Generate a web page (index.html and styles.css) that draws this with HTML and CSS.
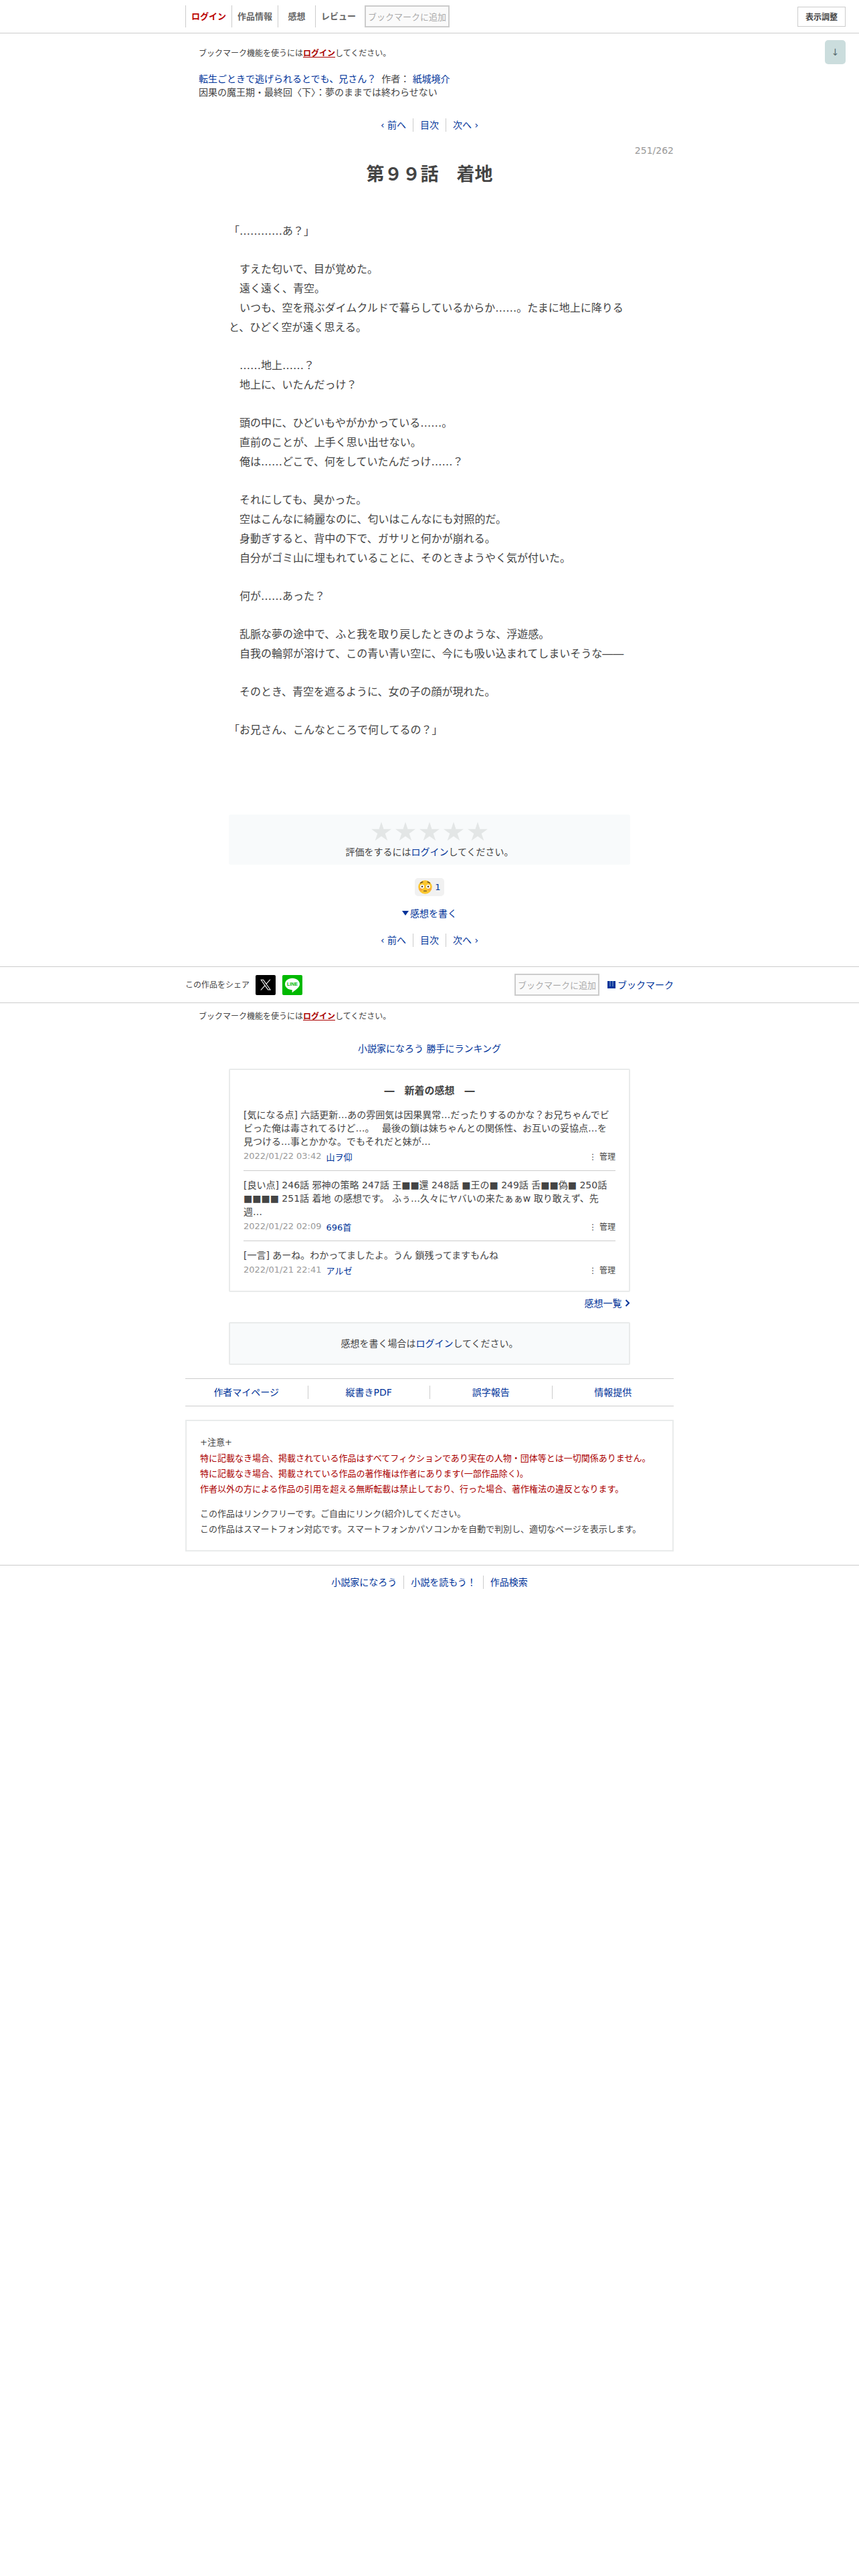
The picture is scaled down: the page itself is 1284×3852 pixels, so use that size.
FILE: index.html
```html
<!DOCTYPE html>
<html lang="ja">
<head>
    <meta charset="UTF-8">
    <meta name="viewport" content="width=device-width, initial-scale=1.0">
    <title>転生ごときで逃げられるとでも、兄さん？ - 第９９話　着地</title>
    <link rel="stylesheet" href="styles.css">
</head>
<body>
    <header class="header">
        <nav class="head-nav">
            <a href="#" class="login">ログイン</a>
            <a href="#">作品情報</a>
            <a href="#">感想</a>
            <a href="#">レビュー</a>
            <button type="button" class="bookmark-button" disabled>ブックマークに追加</button>
        </nav>
        <button type="button" class="display-button">表示調整</button>
    </header>
    <a href="#footer" class="page-down">↓</a>

    <main>
        <div class="container">
            <p class="bookmark-note">ブックマーク機能を使うには<a href="#">ログイン</a>してください。</p>

            <div class="novel-info">
                <p><a href="#">転生ごときで逃げられるとでも、兄さん？</a><span class="author">作者： <a href="#">紙城境介</a></span></p>
                <p>因果の魔王期・最終回〈下〉：夢のままでは終わらせない</p>
            </div>

            <nav class="pager">
                <a href="#">‹ 前へ</a>
                <a href="#">目次</a>
                <a href="#">次へ ›</a>
            </nav>

            <p class="novel-no">251/262</p>
            <h1 class="subtitle">第９９話　着地</h1>
        </div>

        <article class="column honbun">
            <div class="stanza">
                <p>「…………あ？」</p>
            </div>
            <div class="stanza">
                <p>　すえた匂いで、目が覚めた。</p>
                <p>　遠く遠く、青空。</p>
                <p>　いつも、空を飛ぶダイムクルドで暮らしているからか……。たまに地上に降りると、ひどく空が遠く思える。</p>
            </div>
            <div class="stanza">
                <p>　……地上……？</p>
                <p>　地上に、いたんだっけ？</p>
            </div>
            <div class="stanza">
                <p>　頭の中に、ひどいもやがかかっている……。</p>
                <p>　直前のことが、上手く思い出せない。</p>
                <p>　俺は……どこで、何をしていたんだっけ……？</p>
            </div>
            <div class="stanza">
                <p>　それにしても、臭かった。</p>
                <p>　空はこんなに綺麗なのに、匂いはこんなにも対照的だ。</p>
                <p>　身動ぎすると、背中の下で、ガサリと何かが崩れる。</p>
                <p>　自分がゴミ山に埋もれていることに、そのときようやく気が付いた。</p>
            </div>
            <div class="stanza">
                <p>　何が……あった？</p>
            </div>
            <div class="stanza">
                <p>　乱脈な夢の途中で、ふと我を取り戻したときのような、浮遊感。</p>
                <p>　自我の輪郭が溶けて、この青い青い空に、今にも吸い込まれてしまいそうな――</p>
            </div>
            <div class="stanza">
                <p>　そのとき、青空を遮るように、女の子の顔が現れた。</p>
            </div>
            <div class="stanza">
                <p>「お兄さん、こんなところで何してるの？」</p>
            </div>
        </article>

        <section class="column evaluation">
            <svg class="stars" viewBox="0 0 174 28" aria-hidden="true">
                <defs>
                    <path id="star" d="M15 0l3.500 10.700H30l-9.300 6.700L24.300 28 15 21.400 5.700 28l3.600-10.600L0 10.700h11.500z"/>
                </defs>
                <use href="#star"/>
                <use href="#star" x="36"/>
                <use href="#star" x="72"/>
                <use href="#star" x="108"/>
                <use href="#star" x="144"/>
            </svg>
            <p>評価をするには<a href="#">ログイン</a>してください。</p>
        </section>

        <div class="reactions">
            <a href="#" class="reaction">
                <svg width="21" height="21" viewBox="0 0 21 21" aria-hidden="true">
                    <circle cx="10.500" cy="10.500" r="10.300" fill="#fbc62f"/>
                    <circle cx="4" cy="13.500" r="2.600" fill="#f6924b" opacity=".6"/>
                    <circle cx="17" cy="13.500" r="2.600" fill="#f6924b" opacity=".6"/>
                    <circle cx="6" cy="9.800" r="3" fill="#fff"/>
                    <circle cx="15" cy="9.800" r="3" fill="#fff"/>
                    <circle cx="6" cy="9.800" r="1.300" fill="#4a3520"/>
                    <circle cx="15" cy="9.800" r="1.300" fill="#4a3520"/>
                    <path d="M3.500 4.600q1.500-1.600 3.500-1.700M17.500 4.600q-1.500-1.600-3.500-1.700M8.500 16.200h4" fill="none" stroke="#4a3520" stroke-width="1.100" stroke-linecap="round"/>
                </svg>
                <span>1</span>
            </a>
        </div>
        <p class="write-review"><a href="#review"><span class="triangle"></span>感想を書く</a></p>

        <nav class="pager">
            <a href="#">‹ 前へ</a>
            <a href="#">目次</a>
            <a href="#">次へ ›</a>
        </nav>

        <section class="share">
            <div class="container share-inner">
                <span class="share-label">この作品をシェア</span>
                <a href="#" class="sns" aria-label="X">
                    <svg width="30" height="30" viewBox="0 0 30 30">
                        <rect width="30" height="30" rx="2" fill="#000"/>
                        <path transform="translate(6.500 6) scale(.72)" fill="#fff" d="M14.095 10.317 22.286 1h-1.940l-7.115 8.090L7.551 1H1l8.590 12.231L1 23h1.940l7.510-8.543L16.449 23H23zm-2.658 3.022-.872-1.218L3.640 2.430h2.980l5.592 7.821.869 1.219 7.265 10.166h-2.980z"/>
                    </svg>
                </a>
                <a href="#" class="sns" aria-label="LINE">
                    <svg width="30" height="30" viewBox="0 0 30 30">
                        <rect width="30" height="30" rx="2" fill="#00b900"/>
                        <path fill="#fff" d="M15 4.800c6 0 11 3.900 11 8.800 0 3-1.800 5.300-4.600 7.500-2 1.700-4.300 3.400-6 4.600-.8.500-.9 0-.8-.7l.2-1.900c0-.5-.2-.7-.9-.8C8 21.700 4 18.200 4 13.600c0-4.900 5-8.800 11-8.800z"/>
                        <text x="15" y="16" text-anchor="middle" class="line-text">LINE</text>
                    </svg>
                </a>
                <button type="button" class="bookmark-button" disabled>ブックマークに追加</button>
                <a href="#" class="bookmark-link">
                    <svg width="12" height="11" viewBox="0 0 12 11" aria-hidden="true">
                        <path fill="currentColor" d="M0 0h3.700v8h.6V0h3.400v8h.6V0H12v11H0z"/>
                    </svg>
                    ブックマーク
                </a>
            </div>
        </section>

        <div class="container">
            <p class="bookmark-note">ブックマーク機能を使うには<a href="#">ログイン</a>してください。</p>
        </div>

        <p class="ranking"><a href="#">小説家になろう 勝手にランキング</a></p>

        <section class="column review-box">
            <h2>―　新着の感想　―</h2>
            <div class="review">
                <p>[気になる点] 六話更新…あの雰囲気は因果異常…だったりするのかな？お兄ちゃんでビビった俺は毒されてるけど…。　 最後の鎖は妹ちゃんとの関係性、お互いの妥協点…を見つける…事とかかな。でもそれだと妹が…</p>
                <div class="review-meta">
                    <time>2022/01/22 03:42</time>
                    <a href="#">山ヲ仰</a>
                    <span class="manage">⋮ 管理</span>
                </div>
            </div>
            <div class="review">
                <p>[良い点] 246話 邪神の策略 247話 王■■還 248話 ■王の■ 249話 舌■■偽■ 250話 ■■■■ 251話 着地 の感想です。 ふぅ…久々にヤバいの来たぁぁw 取り敢えず、先週…</p>
                <div class="review-meta">
                    <time>2022/01/22 02:09</time>
                    <a href="#">696首</a>
                    <span class="manage">⋮ 管理</span>
                </div>
            </div>
            <div class="review">
                <p>[一言] あーね。わかってましたよ。うん 鎖残ってますもんね</p>
                <div class="review-meta">
                    <time>2022/01/21 22:41</time>
                    <a href="#">アルゼ</a>
                    <span class="manage">⋮ 管理</span>
                </div>
            </div>
        </section>
        <p class="column review-all">
            <a href="#">感想一覧
                <svg width="8" height="11" viewBox="0 0 8 11" aria-hidden="true">
                    <path d="M1.500 1l4.500 4.500L1.500 10" fill="none" stroke="currentColor" stroke-width="2"/>
                </svg>
            </a>
        </p>

        <p class="column review-login" id="review">感想を書く場合は<a href="#">ログイン</a>してください。</p>

        <nav class="container novel-foot">
            <a href="#">作者マイページ</a>
            <a href="#">縦書きPDF</a>
            <a href="#">誤字報告</a>
            <a href="#">情報提供</a>
        </nav>

        <section class="container notice">
            <p>+注意+</p>
            <p class="attention">特に記載なき場合、掲載されている作品はすべてフィクションであり実在の人物・団体等とは一切関係ありません。<br>
            特に記載なき場合、掲載されている作品の著作権は作者にあります(一部作品除く)。<br>
            作者以外の方による作品の引用を超える無断転載は禁止しており、行った場合、著作権法の違反となります。</p>
            <p>この作品はリンクフリーです。ご自由にリンク(紹介)してください。<br>
            この作品はスマートフォン対応です。スマートフォンかパソコンかを自動で判別し、適切なページを表示します。</p>
        </section>
    </main>

    <footer class="footer" id="footer">
        <nav class="pager">
            <a href="#">小説家になろう</a>
            <a href="#">小説を読もう！</a>
            <a href="#">作品検索</a>
        </nav>
    </footer>
</body>
</html>
```
FILE: styles.css
```css
* {
    margin: 0;
    padding: 0;
    box-sizing: border-box;
}

body {
    position: relative;
    background: #fff;
    color: #444;
    font-family: "DejaVu Sans", "Noto Sans CJK JP", sans-serif;
    font-size: 14px;
    line-height: 20px;
}

a {
    color: #039;
    text-decoration: none;
}

button {
    font-family: inherit;
}

.container {
    max-width: 730px;
    margin: 0 auto;
}

.column {
    max-width: 600px;
    margin: 0 auto;
}

/* header */
.header {
    display: grid;
    grid-template-columns: 1fr minmax(0, 730px) 1fr;
    padding: 8px 20px;
    border-bottom: 1px solid #ccc;
}

.head-nav {
    grid-column: 2;
    display: flex;
}

.head-nav a {
    min-width: 56px;
    padding: 0 8px;
    border-left: 1px solid #ccc;
    color: #666;
    font-size: 13px;
    font-weight: bold;
    line-height: 33px;
    text-align: center;
}

.head-nav .login {
    color: #b00;
}

.head-nav .bookmark-button {
    margin-left: 5px;
}

.bookmark-button {
    height: 33px;
    padding: 0 3px;
    background: #fafafa;
    border: 2px solid #ccc;
    color: #aaa;
    font-size: 13px;
    white-space: nowrap;
}

.display-button {
    justify-self: end;
    align-self: center;
    width: 72px;
    height: 30px;
    background: #fff;
    border: 1px solid #ccc;
    color: #444;
    font-size: 12px;
    font-weight: bold;
}

.page-down {
    position: absolute;
    top: 60px;
    right: 20px;
    width: 31px;
    background: #cbdddd;
    border-radius: 5px;
    color: #566b70;
    font-size: 14px;
    line-height: 36px;
    text-align: center;
}

/* novel */
.bookmark-note {
    padding: 0 20px;
    font-size: 12px;
}

.bookmark-note a {
    color: #a00;
    font-weight: bold;
    text-decoration: underline;
}

main > .container:first-child .bookmark-note {
    padding-top: 20px;
}

.novel-info {
    padding: 18px 20px 0;
}

.author {
    margin-left: 8px;
}

.pager {
    display: flex;
    justify-content: center;
}

.pager a {
    padding: 0 10px;
}

.pager a + a {
    border-left: 1px solid #ccc;
}

.novel-info + .pager {
    margin-top: 29px;
}

.novel-no {
    margin-top: 18px;
    color: #999;
    text-align: right;
}

.subtitle {
    margin-top: 6px;
    font-size: 27px;
    line-height: 40px;
    text-align: center;
}

.honbun {
    padding: 50px 0 84px;
    font-size: 16px;
    line-height: 29px;
}

.stanza {
    margin-bottom: 28px;
}

/* evaluation */
.evaluation {
    padding: 11px 0 9px;
    background: #f8fafb;
    border-radius: 3px;
    text-align: center;
}

.stars {
    display: block;
    width: 174px;
    height: 28px;
    margin: 0 auto 7px;
    fill: #e3e6e6;
}

.reactions {
    display: flex;
    justify-content: center;
    margin-top: 20px;
}

.reaction {
    display: flex;
    align-items: center;
    gap: 4px;
    padding: 3px 5px;
    background: #f1f1f1;
    border-radius: 5px;
    font-size: 13px;
}

.write-review {
    margin: 16px 0 20px;
    text-align: center;
}

.triangle {
    display: inline-block;
    margin-right: 2px;
    border: 5px solid transparent;
    border-top: 7px solid #039;
    border-bottom: 0;
    vertical-align: 2px;
}

/* share */
.share {
    margin: 29px 0 10px;
    padding: 10px 0;
    border-top: 1px solid #ccc;
    border-bottom: 1px solid #ccc;
}

.share-inner {
    display: flex;
    align-items: center;
}

.share-label {
    margin-right: 9px;
    font-size: 12px;
}

.sns {
    height: 30px;
    margin-right: 10px;
}

.line-text {
    fill: #00b900;
    font-family: "Liberation Sans", sans-serif;
    font-size: 7px;
    font-weight: bold;
}

.share .bookmark-button {
    margin-left: auto;
}

.bookmark-link {
    display: flex;
    align-items: center;
    gap: 3px;
    margin-left: 12px;
}

/* reviews */
.ranking {
    margin: 28px 0 20px;
    text-align: center;
}

.review-box {
    padding: 21px 20px 10px;
    border: 2px solid #e9ebeb;
    border-radius: 2px;
}

.review-box h2 {
    margin-bottom: 5px;
    font-size: 15px;
    line-height: 20px;
    text-align: center;
}

.review {
    padding: 11px 0 8px;
}

.review + .review {
    border-top: 1px solid #ccc;
}

.review-meta {
    display: flex;
    gap: 7px;
    height: 25px;
    font-size: 13px;
    line-height: 24px;
}

.review-meta time {
    color: #999;
}

.review-meta a {
    line-height: 27px;
}

.manage {
    margin-left: auto;
    font-size: 12px;
    line-height: 26px;
}

.review-all {
    padding: 7px 0 18px;
    text-align: right;
}

.review-login {
    padding: 20px;
    background: #f8fafb;
    border: 2px solid #e9ebeb;
    border-radius: 2px;
    text-align: center;
}

/* footer */
.novel-foot {
    display: grid;
    grid-template-columns: repeat(4, 1fr);
    margin-top: 20px;
    padding: 10px 0;
    border-top: 1px solid #ccc;
    border-bottom: 1px solid #ccc;
    text-align: center;
}

.novel-foot a + a {
    border-left: 1px solid #ccc;
}

.notice {
    margin-top: 20px;
    padding: 20px;
    border: 2px solid #e9ebeb;
    font-size: 13px;
    line-height: 23px;
}

.notice .attention {
    margin: 1px 0 14px;
    color: #a00;
}

.footer {
    margin-top: 20px;
    padding: 15px 0;
    border-top: 1px solid #ccc;
}
```
